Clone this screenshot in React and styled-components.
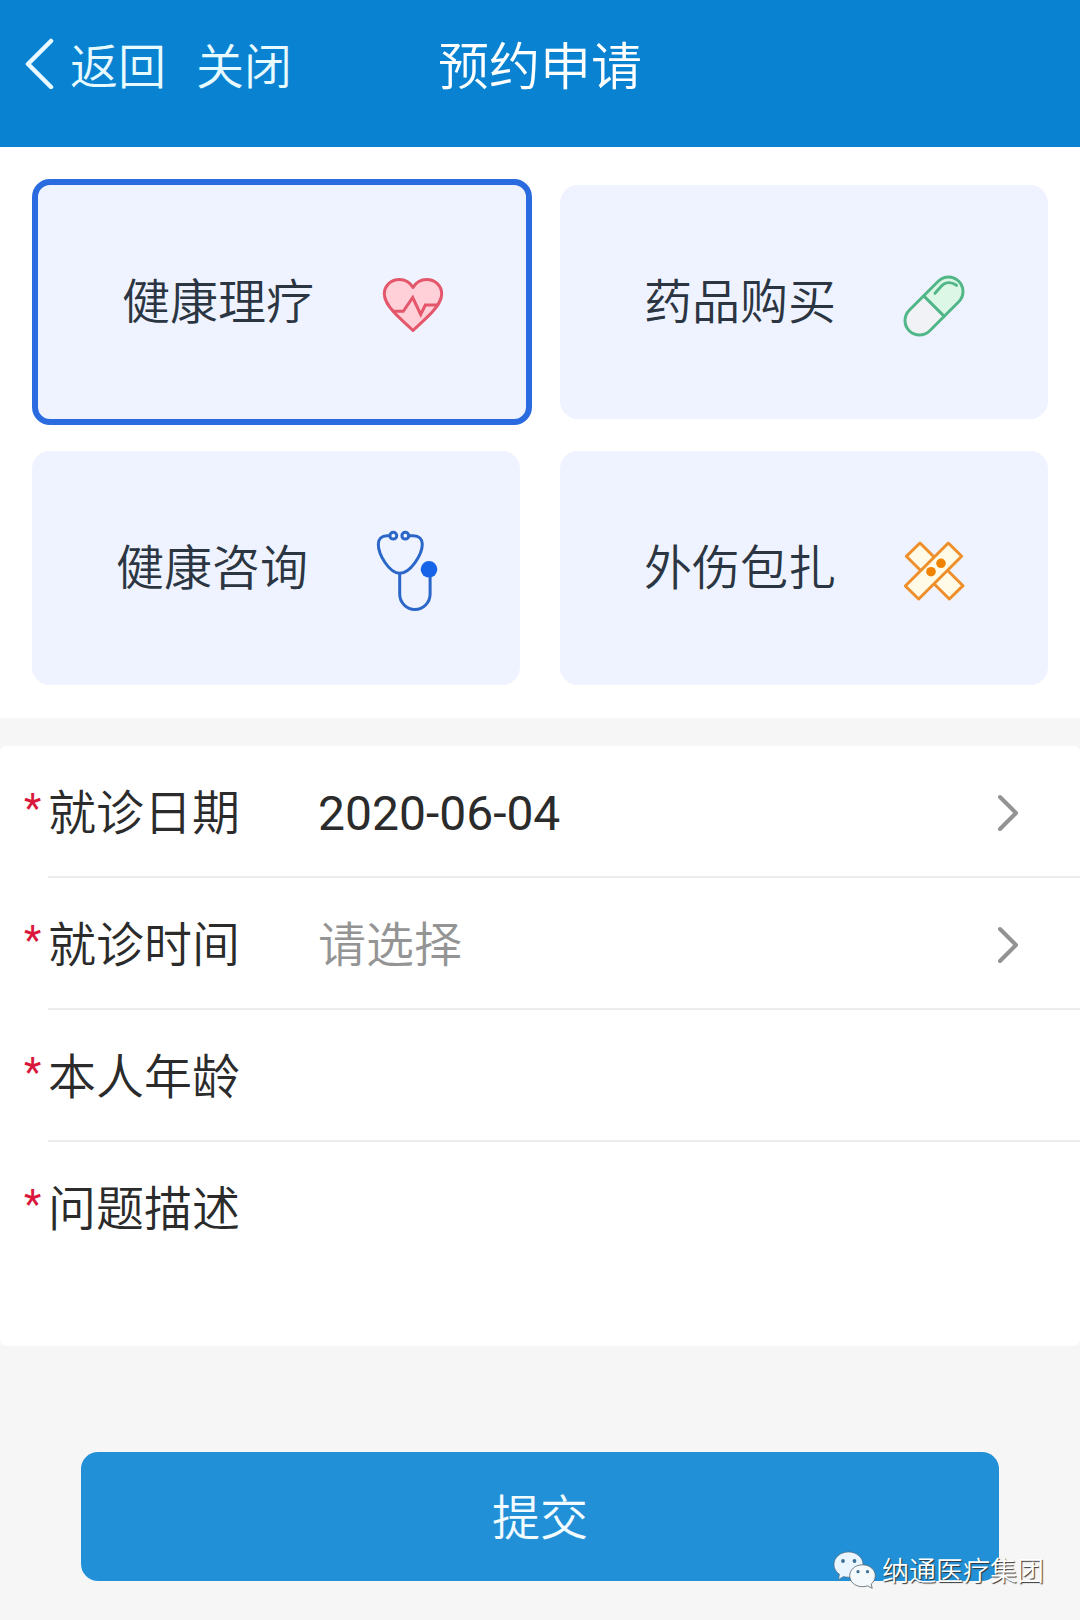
import React, { useState } from 'react';
import styled, { createGlobalStyle } from 'styled-components';

const GlobalStyle = createGlobalStyle`
* {
  box-sizing: border-box;
}
body {
  margin: 0;
  background: #f6f6f6;
}
body, button, input, textarea {
  font-family: "Noto Sans CJK SC", sans-serif;
  font-size: 48px;
  font-weight: 350;
  line-height: 64px;
}
button {
  padding: 0;
  border: none;
  background: none;
  cursor: pointer;
}
`;

const Header = styled.header`
  display: grid;
  grid-template-columns: 1fr auto 1fr;
  align-items: center;
  padding: 31px 24px 52px;
  background: #0983d1;
  color: #fff;
`;
const HeaderActions = styled.nav`
  display: flex;
  gap: 30px;
`;
const HeaderButton = styled.button`
  display: flex;
  align-items: center;
  gap: 14px;
  color: #e6faff;
`;
const Title = styled.h1`
  margin: 0;
  font-size: 51px;
  font-weight: 350;
`;

const Services = styled.section`
  display: grid;
  grid-template-columns: 1fr 1fr;
  grid-auto-rows: 234px;
  gap: 32px 40px;
  padding: 38px 32px 33px;
  background: #fff;
`;
const ServiceCard = styled.button`
  display: flex;
  align-items: center;
  justify-content: center;
  gap: 68px;
  margin: ${props => (props.$active ? '-6px -12px -6px 0' : '0')};
  padding-bottom: 8px;
  border: ${props => (props.$active ? '6px solid #2a6be0' : 'none')};
  border-radius: 18px;
  background: #eff3ff;
  color: #2b3642;
`;
const ServiceIcon = styled.svg`
  width: 60px;
  height: 84px;
  margin-top: 14px;
  overflow: visible;
  fill: none;
  stroke-width: 3;
  stroke-linejoin: round;
  stroke-linecap: round;
`;

const Form = styled.form`
  margin-top: 28px;
`;
const Fields = styled.div`
  border-radius: 6px;
  background: #fff;
`;
const Row = styled.div`
  display: grid;
  grid-template-columns: 24px 1fr;
  min-height: ${props => (props.$tall ? '204px' : '132px')};
  padding-left: 24px;
`;
const Required = styled.span`
  padding-top: 31px;
  color: #d9183b;
  font-family: Roboto, sans-serif;
  font-size: 40px;
  font-weight: 400;
`;
const RowBody = styled.div`
  display: flex;
  align-items: flex-start;
  padding: 31px 60px 31px 0;
  border-bottom: ${props => (props.$last ? 'none' : '2px solid #ececec')};
`;
const Label = styled.label`
  flex: 0 0 270px;
  color: #2b2b2b;
`;
const Input = styled.input`
  flex: 1;
  min-width: 0;
  height: 68px;
  padding: 4px 0 0;
  border: none;
  background: none;
  color: #2b2b2b;
  font-family: Roboto, sans-serif;
  font-weight: 400;
  &::placeholder {
    color: #949494;
    font-family: "Noto Sans CJK SC", sans-serif;
    font-weight: 350;
    opacity: 1;
  }
  &:focus {
    outline: 0;
  }
`;
const TextArea = styled.textarea`
  flex: 1;
  min-width: 0;
  height: 128px;
  padding: 0;
  border: none;
  background: none;
  color: #2b2b2b;
  resize: none;
  &:focus {
    outline: 0;
  }
`;
const Chevron = styled.svg`
  width: 24px;
  height: 68px;
  fill: none;
  stroke: #939393;
  stroke-width: 4;
  stroke-linecap: round;
  stroke-linejoin: round;
`;

const Footer = styled.div`
  position: relative;
  padding: 106px 81px 39px;
`;
const SubmitButton = styled.button`
  width: 100%;
  height: 129px;
  padding-bottom: 6px;
  border-radius: 17px;
  background: #2290d7;
  color: #f2fbff;
`;
const Watermark = styled.div`
  position: absolute;
  right: 36px;
  bottom: 30px;
  display: flex;
  align-items: center;
  gap: 6px;
  color: #fff;
  font-size: 27px;
  line-height: 40px;
  text-shadow: 1px 1px 1px #333;
`;

const HeartIcon = () => (
  <ServiceIcon viewBox="0 0 60 84" stroke="#e4576b" aria-hidden="true">
    <path fill="#ffd0d8" d="M31 24.5C28 19.5 23 16.5 17.5 16.5C9 16.5 2.3 22.5 2.3 31C2.3 38 7 43.5 11.3 48.5C17 55 24 60.5 31 67.5C38 60.5 45 55 50.7 48.5C55 43.5 59.7 38 59.7 31C59.7 22.5 53 16.5 44.5 16.5C39 16.5 34 19.5 31 24.5Z" />
    <path strokeLinejoin="miter" d="M11.5 48.3H21.3L30.7 34.5L38.7 51.5L43.3 42H55" />
  </ServiceIcon>
);

const PillIcon = () => (
  <ServiceIcon viewBox="0 0 60 84" stroke="#52b788" aria-hidden="true">
    <g transform="rotate(-45 30 43)">
      <path fill="#f1f2f5" d="M30 28.5H9.5a14.5 14.5 0 0 0 0 29H30Z" />
      <path fill="#ddf7e6" d="M30 28.5H50.5a14.5 14.5 0 0 1 0 29H30Z" />
    </g>
    <path d="M31 30.3L37 23.5C41 19 47 18.5 52.5 22.3" />
  </ServiceIcon>
);

const StethoscopeIcon = () => (
  <ServiceIcon viewBox="0 0 60 84" stroke="#2b67c8" aria-hidden="true">
    <circle cx="17.3" cy="6.7" r="3.4" />
    <circle cx="29.3" cy="6.7" r="3.4" />
    <path d="M13.7 6.7H11C5.5 6.7 2.3 10 2.3 15C2.3 26 13.5 44.3 23.7 44.3C34 44.3 46.3 26 46.3 15C46.3 10 43 6.7 37.5 6.7H33" />
    <path d="M23.7 44.5V65a15.2 15.5 0 0 0 30.4 0V42" />
    <circle cx="53" cy="40.3" r="8.3" fill="#1764e8" stroke="none" />
  </ServiceIcon>
);

const BandageIcon = () => (
  <ServiceIcon viewBox="0 0 60 84" stroke="#ee8f2c" aria-hidden="true">
    <path fill="#fffbe6" d="M16 14L2.3 27.3L45.3 70L59 56.7Z" />
    <path fill="#fffbe6" d="M44.3 14L57.7 27.3L14.7 70L1.3 57Z" />
    <circle cx="37" cy="34.3" r="4.8" fill="#f08300" stroke="none" />
    <circle cx="27" cy="42.7" r="4.8" fill="#f08300" stroke="none" />
  </ServiceIcon>
);

const WechatIcon = () => (
  <svg width="43" height="38" viewBox="0 0 43 38" aria-hidden="true">
    <path fill="#eaf6ff" stroke="#55606a" strokeWidth="0.6" d="M15.5 1C7.5 1 1 6.5 1 13.5C1 17.5 3 21 6.5 23.3L5.5 28.5L10.5 25.5C12 26 13.8 26.2 15.5 26.2C23.5 26.2 30 20.5 30 13.5S23.5 1 15.5 1Z" />
    <path fill="#f4f9fc" stroke="#55606a" strokeWidth="0.8" d="M29.5 13.8C22.3 13.8 16.7 18.6 16.7 24.8S22.3 35.7 29.5 35.7C31.3 35.7 33 35.4 34.5 34.8L39.2 37.3L38.2 33C40.8 31 42.3 28 42.3 24.8C42.3 18.6 36.7 13.8 29.5 13.8Z" />
    <g fill="#3d6f95">
      <circle cx="10" cy="10" r="1.9" />
      <circle cx="21.5" cy="10" r="1.9" />
      <circle cx="25" cy="20.7" r="1.6" />
      <circle cx="34.5" cy="20.7" r="1.6" />
    </g>
  </svg>
);

const ChevronRight = () => (
  <Chevron viewBox="0 0 24 68" aria-hidden="true">
    <path d="M4 20L20 36L4 52" />
  </Chevron>
);

const services = [
  { name: '健康理疗', Icon: HeartIcon },
  { name: '药品购买', Icon: PillIcon },
  { name: '健康咨询', Icon: StethoscopeIcon },
  { name: '外伤包扎', Icon: BandageIcon },
];

const Field = ({ id, label, tall, children }) => (
  <Row $tall={tall}>
    <Required>*</Required>
    <RowBody $last={tall}>
      <Label htmlFor={id}>{label}</Label>
      {children}
    </RowBody>
  </Row>
);

const App = () => {
  const [selected, setSelected] = useState('健康理疗');

  return (
    <>
      <GlobalStyle />
      <Header>
        <HeaderActions>
          <HeaderButton type="button">
            <svg width="32" height="52" viewBox="0 0 32 52" fill="none" stroke="#e6faff" strokeWidth="4.5" strokeLinecap="round" strokeLinejoin="round" aria-hidden="true">
              <path d="M27 4L4 27L27 50" />
            </svg>
            返回
          </HeaderButton>
          <HeaderButton type="button">关闭</HeaderButton>
        </HeaderActions>
        <Title>预约申请</Title>
      </Header>
      <Services>
        {services.map(({ name, Icon }) => (
          <ServiceCard
            key={name}
            type="button"
            $active={name === selected}
            aria-pressed={name === selected}
            onClick={() => setSelected(name)}
          >
            {name}
            <Icon />
          </ServiceCard>
        ))}
      </Services>
      <Form onSubmit={e => e.preventDefault()}>
        <Fields>
          <Field id="date" label="就诊日期">
            <Input id="date" type="text" defaultValue="2020-06-04" readOnly />
            <ChevronRight />
          </Field>
          <Field id="time" label="就诊时间">
            <Input id="time" type="text" placeholder="请选择" readOnly />
            <ChevronRight />
          </Field>
          <Field id="age" label="本人年龄">
            <Input id="age" type="text" inputMode="numeric" />
          </Field>
          <Field id="problem" label="问题描述" tall>
            <TextArea id="problem" />
          </Field>
        </Fields>
        <Footer>
          <SubmitButton type="submit">提交</SubmitButton>
          <Watermark>
            <WechatIcon />
            纳通医疗集团
          </Watermark>
        </Footer>
      </Form>
    </>
  );
};

export default App;
